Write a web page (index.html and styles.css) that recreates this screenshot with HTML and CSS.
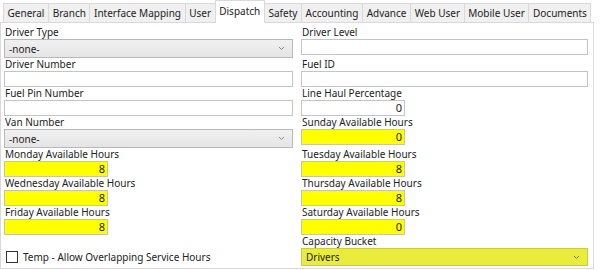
FILE: index.html
```html
<!DOCTYPE html>
<html>
<head>
<meta charset="utf-8">
<link rel="stylesheet" href="styles.css">
</head>
<body>
<div class="window">
  <div class="tabs">
    <div class="tab">General</div>
    <div class="tab">Branch</div>
    <div class="tab">Interface Mapping</div>
    <div class="tab">User</div>
    <div class="tab active">Dispatch</div>
    <div class="tab">Safety</div>
    <div class="tab">Accounting</div>
    <div class="tab">Advance</div>
    <div class="tab">Web User</div>
    <div class="tab">Mobile User</div>
    <div class="tab">Documents</div>
  </div>
  <div class="panel">
    <div class="field">
      <div class="label">Driver Type</div>
      <div class="select"><span>-none-</span><svg class="chev" width="7" height="5" viewBox="0 0 7 5"><path d="M1 1 L3.5 3.5 L6 1" fill="none" stroke="#888" stroke-width="1"/></svg></div>
    </div>
    <div class="field">
      <div class="label">Driver Level</div>
      <div class="input"></div>
    </div>
    <div class="field">
      <div class="label">Driver Number</div>
      <div class="input"></div>
    </div>
    <div class="field">
      <div class="label">Fuel ID</div>
      <div class="input"></div>
    </div>
    <div class="field">
      <div class="label">Fuel Pin Number</div>
      <div class="input"></div>
    </div>
    <div class="field">
      <div class="label">Line Haul Percentage</div>
      <div class="input small">0</div>
    </div>
    <div class="field">
      <div class="label">Van Number</div>
      <div class="select"><span>-none-</span><svg class="chev" width="7" height="5" viewBox="0 0 7 5"><path d="M1 1 L3.5 3.5 L6 1" fill="none" stroke="#888" stroke-width="1"/></svg></div>
    </div>
    <div class="field">
      <div class="label">Sunday Available Hours</div>
      <div class="input small req">0</div>
    </div>
    <div class="field">
      <div class="label">Monday Available Hours</div>
      <div class="input small req">8</div>
    </div>
    <div class="field">
      <div class="label">Tuesday Available Hours</div>
      <div class="input small req">8</div>
    </div>
    <div class="field">
      <div class="label">Wednesday Available Hours</div>
      <div class="input small req">8</div>
    </div>
    <div class="field">
      <div class="label">Thursday Available Hours</div>
      <div class="input small req">8</div>
    </div>
    <div class="field">
      <div class="label">Friday Available Hours</div>
      <div class="input small req">8</div>
    </div>
    <div class="field">
      <div class="label">Saturday Available Hours</div>
      <div class="input small req">0</div>
    </div>
    <div class="field check-field">
      <label class="check"><span class="box"></span><span>Temp - Allow Overlapping Service Hours</span></label>
    </div>
    <div class="field">
      <div class="label">Capacity Bucket</div>
      <div class="select req-select"><span>Drivers</span><svg class="chev" width="7" height="5" viewBox="0 0 7 5"><path d="M1 1 L3.5 3.5 L6 1" fill="none" stroke="#777" stroke-width="1"/></svg></div>
    </div>
  </div>
</div>
</body>
</html>
```
FILE: styles.css
```css
* { box-sizing: border-box; }
html, body {
  margin: 0;
  padding: 0;
  background: #ffffff;
}
body {
  font-family: "Noto Sans", "Open Sans", sans-serif;
  font-size: 10px;
  color: #222;
}
.window {
  width: 602px;
  height: 270px;
  background: #fff;
  overflow: hidden;
}
.tabs {
  display: flex;
  align-items: flex-end;
  height: 22px;
  padding-left: 3px;
}
.tab {
  height: 19px;
  line-height: 18px;
  padding: 0 3.6px;
  border: 1px solid #d9d9d9;
  border-bottom: none;
  margin-right: -1px;
  background: #f0f0f0;
  white-space: nowrap;
}
.tab.active {
  height: 23px;
  line-height: 20px;
  background: #fff;
  position: relative;
  z-index: 1;
  margin-bottom: -1px;
}
.panel {
  width: 594px;
  height: 247px;
  border: 1px solid #d9d9d9;
  display: grid;
  grid-template-columns: 289px 287px;
  column-gap: 8px;
  padding: 3px 0 0 3px;
  align-content: start;
}
.field {
  display: flex;
  flex-direction: column;
}
.label {
  height: 13px;
  line-height: 13px;
  padding-left: 1px;
  white-space: nowrap;
}
.input {
  height: 16px;
  border: 1px solid #c4c4c4;
  background: #fff;
  line-height: 14px;
  padding: 0 2px;
}
.input.small {
  width: 104px;
  text-align: right;
  font-size: 11px;
}
.input.req {
  background: #ffff00;
  border-color: #c8c8a0;
}
.select {
  height: 19px;
  border: 1px solid #b8b8b8;
  background: linear-gradient(#f0f0f0, #e5e5e5);
  display: flex;
  align-items: center;
  justify-content: space-between;
  padding: 0 7px 0 4px;
}
.select.req-select {
  height: 18px;
  background: #eaec3c;
  border-color: #c9c94a;
}
.chev { display: block; }
.check-field {
  justify-content: flex-end;
  padding-bottom: 2px;
}
.check {
  display: flex;
  align-items: center;
  gap: 5px;
  padding-left: 2px;
}
.box {
  width: 12px;
  height: 12px;
  border: 1px solid #333;
  background: #fff;
}
```
